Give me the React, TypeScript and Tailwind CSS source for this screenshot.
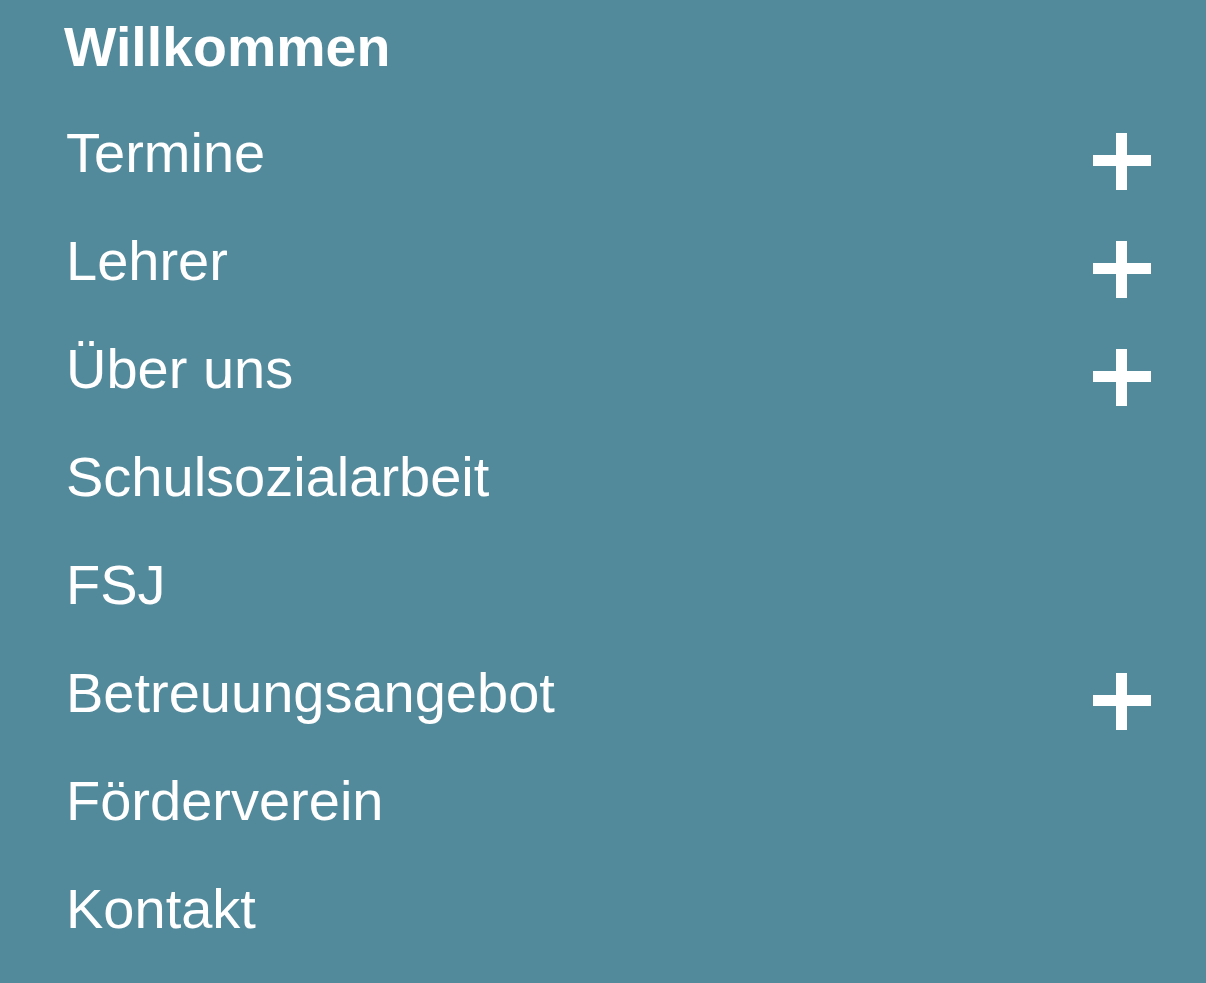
import React from "react";

const items: { label: string; plus: boolean }[] = [
  { label: "Termine", plus: true },
  { label: "Lehrer", plus: true },
  { label: "Über uns", plus: true },
  { label: "Schulsozialarbeit", plus: false },
  { label: "FSJ", plus: false },
  { label: "Betreuungsangebot", plus: true },
  { label: "Förderverein", plus: false },
  { label: "Kontakt", plus: false },
];

function Plus() {
  return (
    <svg width="58" height="58" viewBox="0 0 58 58" className="mt-[33px] shrink-0">
      <rect x="0" y="23" width="58" height="11" fill="#ffffff" />
      <rect x="23" y="1" width="11" height="57" fill="#ffffff" />
    </svg>
  );
}

export default function App() {
  return (
    <div
      className="min-h-screen w-full bg-[#52899b] text-white pl-[66px] pr-[55px]"
      style={{ fontFamily: '"Liberation Sans", Arial, Helvetica, sans-serif' }}
    >
      <div className="h-[99px]">
        <span className="-ml-[2px] block text-[55.5px] leading-[95px] font-bold">Willkommen</span>
      </div>
      {items.map((it) => (
        <div key={it.label} className="flex h-[108px] items-start justify-between">
          <span className="block text-[56px] leading-[108px] font-normal whitespace-nowrap">
            {it.label}
          </span>
          {it.plus && <Plus />}
        </div>
      ))}
    </div>
  );
}
